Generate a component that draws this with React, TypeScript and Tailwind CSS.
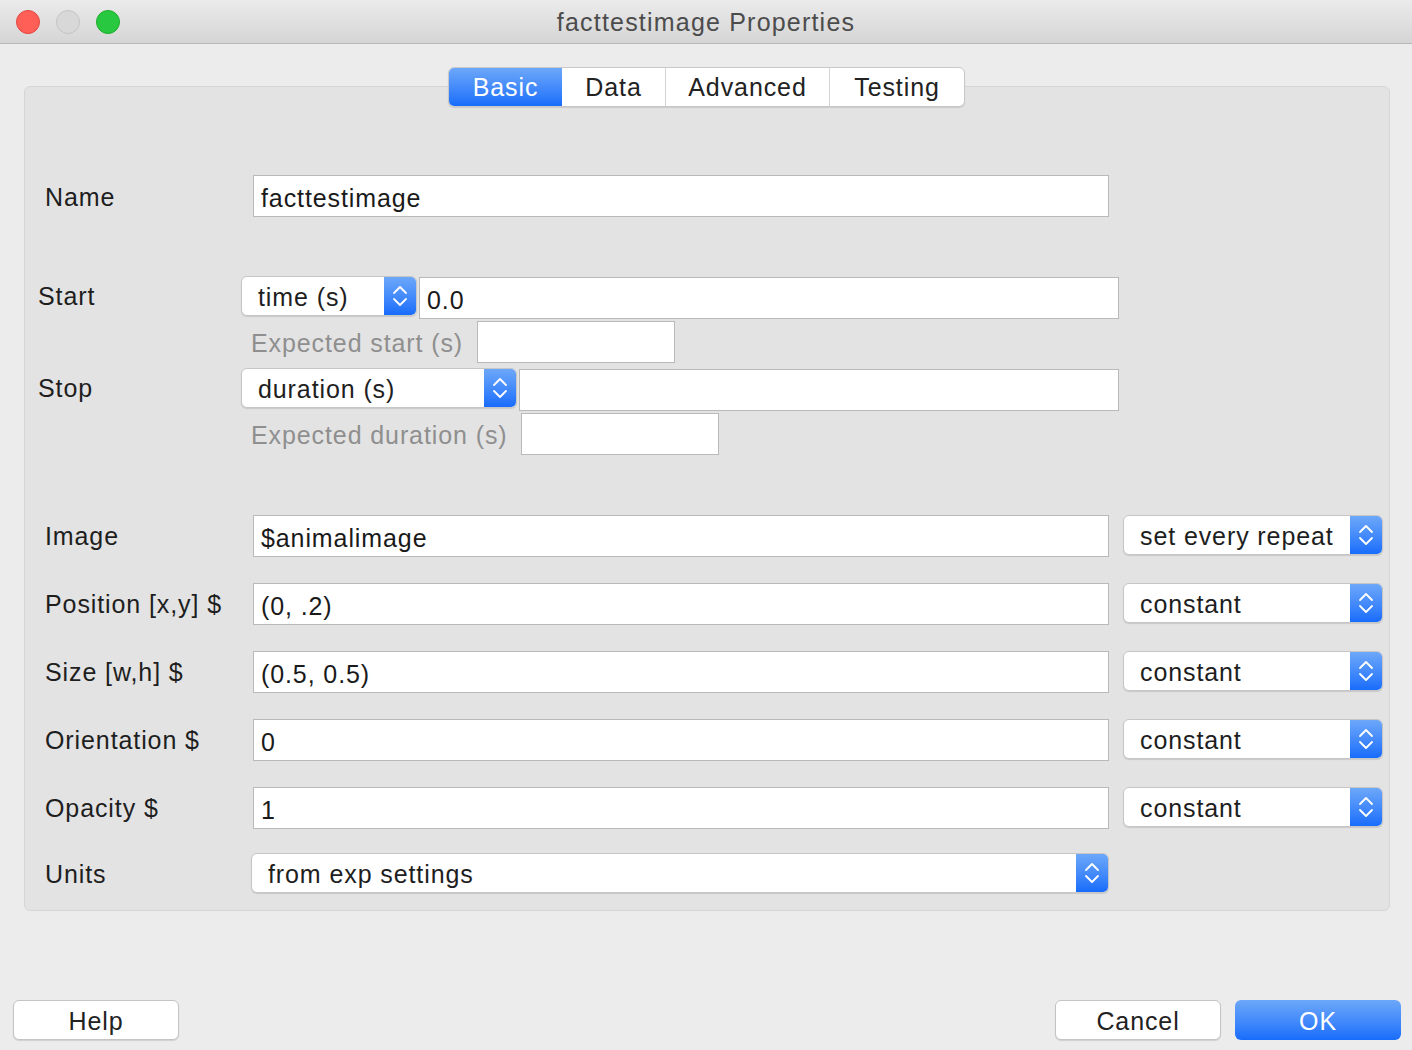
import React from "react";

const font = { fontFamily: '"Liberation Sans", Arial, sans-serif' };

function Chevrons() {
  return (
    <svg width="18" height="26" viewBox="0 0 18 26" fill="none">
      <polyline points="3,10 9,4 15,10" stroke="white" strokeWidth="1.8" strokeLinecap="round" strokeLinejoin="round" />
      <polyline points="3,16 9,22 15,16" stroke="white" strokeWidth="1.8" strokeLinecap="round" strokeLinejoin="round" />
    </svg>
  );
}

function Select({ value, className }: { value: string; className: string }) {
  return (
    <div
      className={
        "flex h-[40px] items-stretch overflow-hidden rounded-[6px] border border-[#c6c6c6] bg-white shadow-[0_1px_1px_rgba(0,0,0,0.12)] " +
        className
      }
    >
      <div className="flex flex-1 items-center pl-[16px] pt-[4px] text-[25px] tracking-[0.9px] text-[#1e1e1e]">{value}</div>
      <div className="flex w-[32px] items-center justify-center bg-gradient-to-b from-[#6ca7f9] to-[#176cfb]">
        <Chevrons />
      </div>
    </div>
  );
}

function Field({ value, className }: { value: string; className: string }) {
  return (
    <div
      className={
        "flex h-[42px] items-center border border-[#b9b9b9] bg-white pl-[7px] pt-[6px] text-[25px] tracking-[0.9px] text-[#1a1a1a] " +
        className
      }
    >
      {value}
    </div>
  );
}

const paramRows = [
  { label: "Image", value: "$animalimage", mode: "set every repeat" },
  { label: "Position [x,y] $", value: "(0, .2)", mode: "constant" },
  { label: "Size [w,h] $", value: "(0.5, 0.5)", mode: "constant" },
  { label: "Orientation $", value: "0", mode: "constant" },
  { label: "Opacity $", value: "1", mode: "constant" },
];

const tabs = ["Basic", "Data", "Advanced", "Testing"];
const tabWidths = ["w-[113px]", "w-[103px]", "w-[164px]", "w-[135px]"];

export default function App() {
  return (
    <div className="flex h-[1050px] w-[1412px] flex-col overflow-hidden bg-[#ececec] tracking-[0.9px]" style={font}>
      {/* title bar */}
      <div className="relative flex h-[44px] shrink-0 items-center justify-center border-b border-[#b8b8b8] bg-gradient-to-b from-[#ebebeb] to-[#d5d5d5] pt-[3px]">
        <div className="absolute left-[16px] top-[10px] flex gap-[16px]">
          <div className="h-[24px] w-[24px] rounded-full border border-[#e2463f] bg-[#ff5f57]" />
          <div className="h-[24px] w-[24px] rounded-full border border-[#c4c4c4] bg-[#d8d8d8]" />
          <div className="h-[24px] w-[24px] rounded-full border border-[#1dad2b] bg-[#28c840]" />
        </div>
        <span className="text-[25px] tracking-[1.2px] text-[#4c4c4c]">facttestimage Properties</span>
      </div>

      {/* tabs */}
      <div className="relative z-10 mt-[23px] flex justify-center pl-[1px]">
        <div className="flex h-[40px] overflow-hidden rounded-[6px] border border-[#c8c8c8] bg-white shadow-[0_1px_1px_rgba(0,0,0,0.12)]">
          {tabs.map((t, i) => (
            <div
              key={t}
              className={
                "flex items-center justify-center pt-[2px] text-[25px] " +
                tabWidths[i] +
                (i === 0
                  ? " bg-gradient-to-b from-[#6ca7f9] to-[#176cfb] text-white"
                  : " text-[#222] " + (i > 1 ? "border-l border-[#d4d4d4]" : ""))
              }
            >
              {t}
            </div>
          ))}
        </div>
      </div>

      {/* panel */}
      <div className="ml-[24px] mr-[22px] -mt-[21px] flex h-[825px] flex-col rounded-[6px] border border-[#d6d6d6] bg-[#e3e3e3] pt-[88px] text-[25px] text-[#1e1e1e]">
        <div className="flex items-center">
          <div className="flex h-[42px] w-[228px] items-center pl-[20px] pt-[4px]">Name</div>
          <Field value="facttestimage" className="w-[856px]" />
        </div>

        <div className="mt-[59px] flex h-[43px] items-start">
          <div className="flex h-[40px] w-[216px] items-center pl-[13px] pt-[2px]">Start</div>
          <Select value="time (s)" className="w-[176px]" />
          <Field value="0.0" className="ml-[2px] mt-[1px] w-[700px]" />
        </div>
        <div className="mt-[2px] flex items-center">
          <div className="flex h-[42px] w-[452px] items-center pl-[226px] pt-[4px] text-[#8f8f8f]">Expected start (s)</div>
          <Field value="" className="w-[198px]" />
        </div>
        <div className="mt-[5px] flex h-[43px] items-start">
          <div className="flex h-[40px] w-[216px] items-center pl-[13px] pt-[2px]">Stop</div>
          <Select value="duration (s)" className="w-[276px]" />
          <Field value="" className="ml-[2px] mt-[1px] w-[600px]" />
        </div>
        <div className="mt-[2px] flex items-center">
          <div className="flex h-[42px] w-[496px] items-center pl-[226px] pt-[4px] text-[#8f8f8f]">Expected duration (s)</div>
          <Field value="" className="w-[198px]" />
        </div>

        <div className="mt-[60px] flex flex-col gap-[26px]">
          {paramRows.map((r) => (
            <div key={r.label} className="flex h-[42px] items-start">
              <div className="flex h-[42px] w-[228px] items-center pl-[20px] pt-[2px]">{r.label}</div>
              <Field value={r.value} className="w-[856px]" />
              <Select value={r.mode} className="ml-[14px] w-[260px]" />
            </div>
          ))}
        </div>

        <div className="mt-[24px] flex h-[40px] items-center">
          <div className="flex h-[40px] w-[226px] items-center pl-[20px] pt-[4px]">Units</div>
          <Select value="from exp settings" className="w-[858px]" />
        </div>
      </div>

      {/* buttons */}
      <div className="mt-[89px] flex items-center pl-[13px] pr-[11px] text-[25px]">
        <div className="flex h-[40px] w-[166px] items-center justify-center rounded-[6px] border border-[#c4c4c4] bg-white pt-[3px] text-[#222] shadow-[0_1px_1px_rgba(0,0,0,0.12)]">
          Help
        </div>
        <div className="flex-1" />
        <div className="flex h-[40px] w-[166px] items-center justify-center rounded-[6px] border border-[#c4c4c4] bg-white pt-[3px] text-[#222] shadow-[0_1px_1px_rgba(0,0,0,0.12)]">
          Cancel
        </div>
        <div className="ml-[14px] flex h-[40px] w-[166px] items-center justify-center rounded-[6px] bg-gradient-to-b from-[#6ca7f9] to-[#176cfb] pt-[3px] text-white">
          OK
        </div>
      </div>
    </div>
  );
}
